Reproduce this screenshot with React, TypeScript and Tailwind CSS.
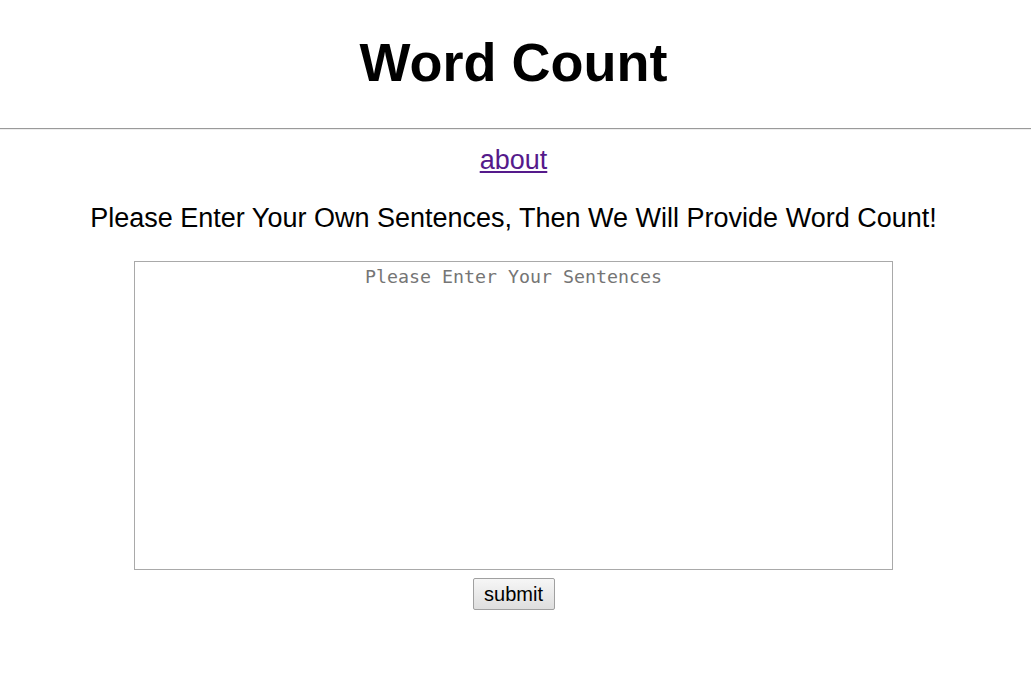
import React from "react";

export default function App() {
  return (
    <div className="min-h-[692px] bg-white text-black pr-[4px]" style={{ fontFamily: '"Liberation Sans", Arial, sans-serif' }}>
      <div className="h-[128px] flex items-start justify-center">
        <h1 className="mt-[31px] text-[54px] leading-[62px] font-bold">Word Count</h1>
      </div>
      <div className="h-[1px] bg-[#9a9a9a] -mr-[4px]" />
      <div className="h-[1px] bg-[#eeeeee] -mr-[4px]" />
      <div className="flex flex-col items-center">
        <a href="#" className="mt-[15px] text-[27px] leading-[31px] text-[#551a8b] underline">about</a>
        <p className="mt-[27px] text-[27px] leading-[31px]">Please Enter Your Own Sentences, Then We Will Provide Word Count!</p>
        <textarea
          placeholder="Please Enter Your Sentences"
          className="mt-[27px] w-[759px] h-[309px] border border-[#a9a9a9] text-center text-[18.3px] leading-[21px] px-[2px] py-[4px] resize-none placeholder:text-[#757575] outline-none"
          style={{ fontFamily: '"DejaVu Sans Mono", monospace' }}
        />
        <button className="mt-[8px] h-[32px] w-[82px] text-[20px] border border-[#a0a0a0] rounded-[2px] bg-gradient-to-b from-[#f6f6f6] to-[#dedede]">submit</button>
      </div>
    </div>
  );
}
